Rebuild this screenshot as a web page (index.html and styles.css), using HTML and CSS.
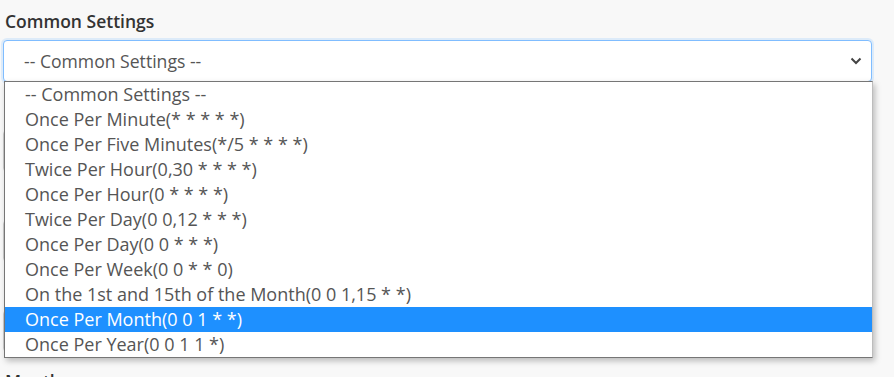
FILE: index.html
```html
<!DOCTYPE html>
<html lang="en">
<head>
<meta charset="utf-8">
<title>Cron Settings</title>
<link rel="stylesheet" href="styles.css">
</head>
<body>
<div class="page">
  <div class="group">
    <label class="label">Common Settings</label>
    <div class="select-wrap">
      <div class="select">
        <span class="select-text">-- Common Settings --</span>
        <svg class="chevron" width="12" height="8" viewBox="0 0 12 8"><path d="M1.5 1.5 L6 6 L10.5 1.5" fill="none" stroke="#444" stroke-width="2"/></svg>
      </div>
      <ul class="dropdown">
        <li class="opt">-- Common Settings --</li>
        <li class="opt">Once Per Minute(* * * * *)</li>
        <li class="opt">Once Per Five Minutes(*/5 * * * *)</li>
        <li class="opt">Twice Per Hour(0,30 * * * *)</li>
        <li class="opt">Once Per Hour(0 * * * *)</li>
        <li class="opt">Twice Per Day(0 0,12 * * *)</li>
        <li class="opt">Once Per Day(0 0 * * *)</li>
        <li class="opt">Once Per Week(0 0 * * 0)</li>
        <li class="opt">On the 1st and 15th of the Month(0 0 1,15 * *)</li>
        <li class="opt selected">Once Per Month(0 0 1 * *)</li>
        <li class="opt">Once Per Year(0 0 1 1 *)</li>
      </ul>
    </div>
  </div>
  <div class="group">
    <div class="label-space"></div>
    <div class="field"></div>
  </div>
  <div class="group">
    <div class="label-space"></div>
    <div class="field"></div>
  </div>
  <div class="group">
    <div class="label-space"></div>
    <div class="field"></div>
  </div>
  <div class="group">
    <label class="label">Month</label>
    <div class="field"></div>
  </div>
</div>
</body>
</html>
```

FILE: styles.css
```css
html, body {
  margin: 0;
  padding: 0;
  background: #f8f8f8;
  font-family: "Open Sans", "Liberation Sans", sans-serif;
  overflow: hidden;
}
.page {
  padding: 9px 22px 0 3px;
}
.group {
  display: flex;
  flex-direction: column;
  margin-bottom: 17px;
}
.label {
  display: block;
  font-size: 17.5px;
  line-height: 24px;
  font-weight: 600;
  color: #333;
  margin: 0 0 7px 2px;
}
.label-space {
  height: 24px;
  margin-bottom: 7px;
}
.select-wrap {
  position: relative;
}
.select {
  height: 40px;
  border: 1px solid #80bdff;
  border-radius: 4px;
  background: #fff;
  box-shadow: 0 0 0 2px rgba(128, 189, 255, 0.22);
  display: flex;
  align-items: center;
  justify-content: space-between;
  padding: 0 9px 0 20px;
}
.select-text {
  font-size: 17.6px;
  color: #555;
}
.chevron {
  display: block;
}
.field {
  height: 40px;
  border: 1px solid #ccc;
  border-radius: 4px;
  background: #fff;
}
.dropdown {
  position: absolute;
  left: 1px;
  top: 41px;
  right: -1px;
  margin: 0;
  padding: 0;
  list-style: none;
  background: #fff;
  border: 1px solid #767676;
  border-right-color: #bdbdbd;
  box-shadow: 2px 3px 6px rgba(0, 0, 0, 0.25);
  z-index: 10;
}
.opt {
  height: 25px;
  line-height: 25px;
  padding-left: 20px;
  font-size: 18px;
  color: #555;
  white-space: nowrap;
}
.opt.selected {
  background: #1e90ff;
  color: #fff;
}
```
